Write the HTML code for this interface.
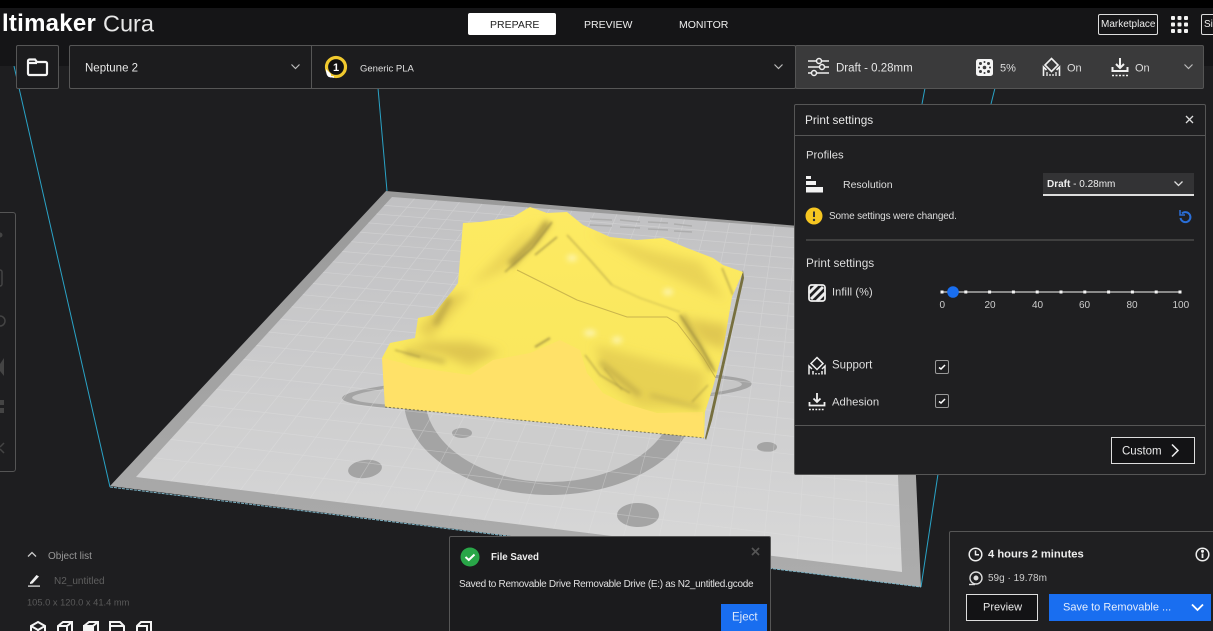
<!DOCTYPE html>
<html><head><meta charset="utf-8"><title>Ultimaker Cura</title>
<style>
html,body{margin:0;padding:0;background:#1e1e20}
#r{position:relative;width:1213px;height:631px;overflow:hidden;background:#1e1e20;font-family:"Liberation Sans",sans-serif;color:#e4e4e4}
#r div{position:absolute;box-sizing:border-box}
.t{position:absolute;white-space:nowrap;transform:translateY(calc(-50% + 2px));line-height:1}
svg{position:absolute;overflow:visible}
</style></head><body><div id="r">
<svg style="left:0;top:0" width="1213" height="631" viewBox="0 0 1213 631">
<defs>
<linearGradient id="bd" x1="0" y1="190" x2="0" y2="580" gradientUnits="userSpaceOnUse"><stop offset="0" stop-color="#c0c0c2"/><stop offset="1" stop-color="#d9d9d9"/></linearGradient>
<linearGradient id="bo" x1="0" y1="190" x2="0" y2="580" gradientUnits="userSpaceOnUse"><stop offset="0" stop-color="#9a9a9a"/><stop offset="1" stop-color="#acacac"/></linearGradient>
<linearGradient id="mt" x1="0" y1="210" x2="0" y2="410" gradientUnits="userSpaceOnUse"><stop offset="0" stop-color="#fdea62"/><stop offset="1" stop-color="#f8e65c"/></linearGradient>
<filter id="b3"><feGaussianBlur stdDeviation="3"/></filter>
<filter id="b1"><feGaussianBlur stdDeviation="1"/></filter>
<filter id="bh"><feGaussianBlur stdDeviation="1"/></filter>
<filter id="b6"><feGaussianBlur stdDeviation="5"/></filter>
<clipPath id="top"><path d="M382 358L390 343L415 338L418 318L433 315L453 290L458 283L463 223L480 222L513 217L530 207L547 213L567 212L583 225L610 237L637 240L663 238L687 248L713 258L723 265L743 272L732 297L723 350L713 387L705 412L704 438L385 407Z"/></clipPath>
</defs>
<g stroke="#2aa3c6" stroke-width="1" fill="none">
<path d="M14 66L110 487M378 88L387 191M925 88L922 104M995 88L991 104M938 474L921 587"/>
</g>
<path d="M110 486L386 191L905 235L921 587Z" fill="url(#bo)"/>
<path d="M110 487L921 587" stroke="#7fb6c8" stroke-width="1" stroke-dasharray="3 1"/>
<path d="M136 477L392 197L888 235L902 572Z" fill="url(#bd)"/>
<ellipse cx="547" cy="391" rx="205" ry="18" fill="#a4a4a4" transform="rotate(-2 547 391)"/>
<ellipse cx="547" cy="391" rx="195" ry="14" fill="#c6c6c6" transform="rotate(-2 547 391)"/>
<ellipse cx="550" cy="400" rx="146" ry="95" fill="#a4a4a4"/>
<ellipse cx="550" cy="397" rx="125" ry="85" fill="#cdcdcd"/>
<ellipse cx="365" cy="469" rx="17" ry="9" fill="#a4a4a4" transform="rotate(-8 365 469)"/>
<ellipse cx="462" cy="433" rx="10" ry="5" fill="#a4a4a4"/>
<ellipse cx="638" cy="515" rx="21" ry="12" fill="#a4a4a4"/>
<ellipse cx="767" cy="447" rx="10" ry="5" fill="#a4a4a4"/>
<g stroke="#e2e2e2" stroke-width=".7" opacity=".4" fill="none">
<path d="M153.6 457.7L901 548.8M170.4 439.4L900.1 526.7M186.4 421.9L899.2 505.7M201.6 405.2L898.4 485.6M216.2 389.3L897.6 466.4M230.2 374L896.9 448M243.5 359.4L896.1 430.5M256.3 345.4L895.4 413.6M268.6 332L894.7 397.4M280.4 319.1L894.1 382M291.6 306.8L893.5 367.1M302.7 294.7L892.9 352.6M312.9 283.5L892.3 339.1M323.1 272.3L891.8 325.7M332.8 261.8L891.2 313M342.2 251.4L890.7 300.5M351.2 241.7L890.2 288.8M359.9 232.1L889.8 277.3M368.3 222.9L889.3 266.2M376.5 214L888.8 255.4M384.3 205.4L888.4 245.1"/>
<path d="M170.8 481.3L414.5 198.7M205.6 485.6L437 200.5M240.4 490L459.5 202.2M275.2 494.3L482 203.9M310 498.6L504.5 205.6M344.8 502.9L527 207.4M379.6 507.2L549.5 209.1M414.4 511.6L572 210.8M449.2 515.9L594.5 212.6M484 520.2L617 214.3M518.8 524.5L639.5 216M553.6 528.8L662 217.8M588.4 533.2L684.5 219.5M623.2 537.5L707 221.2M658 541.8L729.5 223M692.8 546.1L752 224.7M727.6 550.4L774.5 226.4M762.4 554.8L797 228.1M797.2 559.1L819.5 229.9M832 563.4L842 231.6M866.8 567.7L864.5 233.3"/>
</g>
<g stroke="#a8a8a8" stroke-width="1.500" fill="none" opacity=".8">
<path d="M590 219L612 220M590 225L612 226M620 220L640 222M620 227L640 228M648 222L668 223M648 229L668 230M674 224L692 226M674 231L692 232"/>
</g>
<!-- model -->
<path d="M705 438L743 270L744 278L712 420L706 440Z" fill="#77703f"/>
<path d="M382 358L390 343L415 338L418 318L433 315L453 290L458 283L463 223L480 222L513 217L530 207L547 213L567 212L583 225L610 237L637 240L663 238L687 248L713 258L723 265L743 272L732 297L723 350L713 387L705 412L704 438L385 407Z" fill="url(#mt)"/>
<g clip-path="url(#top)">
<g filter="url(#b6)" fill="#d9bf4c">
<path d="M590 232L640 262L690 285L725 300L700 262L650 250Z" opacity=".5"/>
<path d="M595 345L660 362L705 372L700 408L640 408L605 380Z" opacity=".55"/>
<path d="M685 318L728 325L726 350L702 342Z" opacity=".8"/>
<path d="M400 350L440 354L470 366L500 352L470 342L430 342Z" opacity=".85"/>
<path d="M450 295L418 330L430 338L470 292Z" opacity=".7"/>
<path d="M540 222L505 270L470 285L520 235Z" opacity=".5"/>
</g>
<path d="M382 358L403 363L413 367L470 375L493 360L530 353L560 340L580 350L587 373L603 393L623 403L657 413L703 412L704 438L385 407Z" fill="#ffe168"/>
<g filter="url(#b3)" fill="none" stroke="#a8933f">
<path d="M548 222L535 240L510 265" stroke-width="7" opacity=".85"/>
<path d="M450 298L435 325" stroke-width="5" opacity=".7"/>
<path d="M405 352L445 362" stroke-width="4" opacity=".6"/>
<path d="M682 315L712 370" stroke-width="5" opacity=".75"/>
<path d="M600 362L640 395" stroke-width="5" opacity=".55"/>
<path d="M650 395L700 408" stroke-width="3" opacity=".5"/>
</g>
<g fill="none" stroke="#8f7f3c" filter="url(#bh)">
<path d="M552 222L532 248L505 272" stroke-width="1.500" opacity=".7"/>
<path d="M557 237L535 255" stroke-width="1.500" opacity=".7"/>
<path d="M567 235L590 260L612 285" stroke-width="1.300" opacity=".55"/>
<path d="M612 285L640 298L680 312" stroke-width="1" opacity=".4"/>
<path d="M585 355L600 375L630 393" stroke-width="1.300" opacity=".6"/>
<path d="M604 368L622 390" stroke-width="1" opacity=".5"/>
<path d="M680 315L700 345L715 372" stroke-width="1.500" opacity=".65"/>
<path d="M722 268L733 295" stroke-width="1.500" opacity=".6"/>
<path d="M708 385L692 402" stroke-width="1.300" opacity=".5"/>
<path d="M550 338L535 347" stroke-width="2" opacity=".7"/>
<path d="M395 350L420 357" stroke-width="1.500" opacity=".5"/>
</g>
<path d="M517 270L537 280L577 300L627 317L667 317L677 323L703 357L717 380" fill="none" stroke="#b5a045" stroke-width="1" opacity=".7"/>
<g fill="#fffbcf" filter="url(#b3)" opacity=".8">
<ellipse cx="572" cy="258" rx="5" ry="3"/><ellipse cx="590" cy="333" rx="6" ry="3"/><ellipse cx="617" cy="340" rx="5" ry="3"/><ellipse cx="668" cy="292" rx="5" ry="3"/>
</g>
</g>
<path d="M385 407L704 438" stroke="#3a3a2a" stroke-width="1" stroke-dasharray="2 2" opacity=".6"/>
</svg>

<!-- header -->
<div style="left:0;top:0;width:1213px;height:8px;background:#000"></div>
<div style="left:0;top:8px;width:1213px;height:58px;background:#151517"></div>
<span class="t" style="left:2px;top:21.500px;font-size:24px;font-weight:bold;letter-spacing:.25px;color:#fff">ltimaker</span>
<span class="t" style="left:103px;top:21.500px;font-size:23.500px;color:#e8e8e8">Cura</span>
<div style="left:468px;top:13px;width:88px;height:22px;background:#fff;border-radius:2px"></div>
<span class="t" style="left:490px;top:22.500px;font-size:10.500px;color:#222">PREPARE</span>
<span class="t" style="left:584px;top:22.500px;font-size:10.500px;color:#eee">PREVIEW</span>
<span class="t" style="left:679px;top:22.500px;font-size:10.500px;color:#eee">MONITOR</span>
<div style="left:1098px;top:14px;width:60px;height:21px;border:1px solid #ddd;border-radius:2px"></div>
<span class="t" style="left:1101px;top:23px;font-size:10px;color:#eee">Marketplace</span>
<svg style="left:1171px;top:16px" width="18" height="17" fill="#f2f2f2"><rect x="0" y="0" width="4" height="4" rx="1"/><rect x="6.500" y="0" width="4" height="4" rx="1"/><rect x="13" y="0" width="4" height="4" rx="1"/><rect x="0" y="6.500" width="4" height="4" rx="1"/><rect x="6.500" y="6.500" width="4" height="4" rx="1"/><rect x="13" y="6.500" width="4" height="4" rx="1"/><rect x="0" y="13" width="4" height="4" rx="1"/><rect x="6.500" y="13" width="4" height="4" rx="1"/><rect x="13" y="13" width="4" height="4" rx="1"/></svg>
<div style="left:1201px;top:14px;width:30px;height:21px;border:1px solid #ddd;border-radius:2px"></div>
<span class="t" style="left:1204px;top:23px;font-size:10px;color:#eee">Si</span>

<!-- toolbar -->
<div style="left:16px;top:45px;width:43px;height:44px;background:#1c1c1e;border:1px solid #565656;border-radius:2px"></div>
<svg style="left:26px;top:57px" width="23" height="20" fill="none" stroke="#f4f4f4" stroke-width="2.200"><path d="M2 4a1.500 1.500 0 0 1 1.500-1.500H9L11 5H19.500A1.500 1.500 0 0 1 21 6.500V16.500A1.500 1.500 0 0 1 19.500 18H3.500A1.500 1.500 0 0 1 2 16.500Z"/><path d="M2 6H11"/></svg>
<div style="left:69px;top:45px;width:727px;height:44px;background:#1c1c1e;border:1px solid #565656;border-radius:2px"></div>
<div style="left:311px;top:46px;width:1px;height:42px;background:#565656"></div>
<span class="t" style="left:85px;top:66.500px;font-size:11.500px;color:#e8e8e8">Neptune 2</span>
<svg style="left:290px;top:63px" width="11" height="8" fill="none" stroke="#bbb" stroke-width="1.200"><path d="M1.500 1.500L5.500 5.500L9.500 1.500"/></svg>
<svg style="left:324px;top:55px" width="24" height="24"><circle cx="12" cy="12" r="9.500" fill="#111" stroke="#f0c92e" stroke-width="3.200"/><path d="M2 14c0 5 1 7 3 8l2 .500V19" fill="#fff"/><path d="M6 21.500L10 22" stroke="#fff" stroke-width="1.500"/><text x="12" y="16" font-size="11" font-weight="bold" fill="#fff" text-anchor="middle" font-family="Liberation Sans">1</text></svg>
<span class="t" style="left:360px;top:66.500px;font-size:9.500px;color:#e0e0e0">Generic PLA</span>
<svg style="left:773px;top:63px" width="11" height="8" fill="none" stroke="#bbb" stroke-width="1.200"><path d="M1.500 1.500L5.500 5.500L9.500 1.500"/></svg>

<div style="left:795px;top:45px;width:409px;height:44px;background:#3a3a3b;border:1px solid #555;border-radius:2px"></div>
<svg style="left:807px;top:57px" width="23" height="20" fill="none" stroke="#f0f0f0" stroke-width="1.500"><path d="M1 4H9M15 4H22M1 10H12M18 10H22M1 16H4M10 16H22"/><circle cx="12" cy="4" r="2.500"/><circle cx="15" cy="10" r="2.500"/><circle cx="7" cy="16" r="2.500"/></svg>
<span class="t" style="left:836px;top:66.500px;font-size:11.500px;color:#e8e8e8">Draft - 0.28mm</span>
<svg style="left:976px;top:59px" width="17" height="17"><rect width="17" height="17" rx="2.500" fill="#f4f4f4"/><g fill="#3a3a3b"><circle cx="4.500" cy="4.500" r="1.500"/><circle cx="12.500" cy="4.500" r="1.500"/><circle cx="8.500" cy="8.500" r="1.800"/><circle cx="4.500" cy="12.500" r="1.500"/><circle cx="12.500" cy="12.500" r="1.500"/><circle cx="8.500" cy="3" r="1"/><circle cx="8.500" cy="14" r="1"/><circle cx="3" cy="8.500" r="1"/><circle cx="14" cy="8.500" r="1"/></g></svg>
<span class="t" style="left:1000px;top:66.500px;font-size:11px;color:#ddd">5%</span>
<svg style="left:1042px;top:57px" width="19" height="20" fill="none" stroke="#f0f0f0" stroke-width="1.600"><path d="M9.500 1.500L16 8L9.500 14.500L3 8Z"/><path d="M1.500 19V10L4.500 13M17.500 19V10L14.500 13" /><path d="M5 19V15M8 19V17M11 19V17M14 19V15" stroke-width="1.300"/></svg>
<span class="t" style="left:1067px;top:66.500px;font-size:11px;color:#ddd">On</span>
<svg style="left:1111px;top:57px" width="18" height="20" fill="none" stroke="#f0f0f0" stroke-width="2"><path d="M9 1V10M5 7L9 11L13 7"/><path d="M1.500 10V14H16.500V10"/><path d="M1 18.500H17" stroke-dasharray="2 1.500" stroke-width="1.500"/></svg>
<span class="t" style="left:1135px;top:66.500px;font-size:11px;color:#ddd">On</span>
<svg style="left:1183px;top:63px" width="11" height="8" fill="none" stroke="#bbb" stroke-width="1.200"><path d="M1.500 1.500L5.500 5.500L9.500 1.500"/></svg>

<!-- print settings -->
<div style="left:794px;top:104px;width:412px;height:371px;background:#1f1f21;border:1px solid #565656;border-radius:2px"></div>
<div style="left:795px;top:135px;width:410px;height:1px;background:#565656"></div>
<span class="t" style="left:805px;top:118.500px;font-size:11.800px;color:#e8e8e8">Print settings</span>
<svg style="left:1185px;top:115px" width="9" height="9" stroke="#ddd" stroke-width="1.300"><path d="M1 1L8 8M8 1L1 8"/></svg>
<span class="t" style="left:806px;top:154px;font-size:11.300px;color:#ddd">Profiles</span>
<svg style="left:806px;top:175px" width="18" height="18" fill="#f2f2f2"><rect x="0" y="1" width="5" height="3"/><rect x="0" y="6" width="10" height="4"/><rect x="0" y="12" width="17" height="5.500"/></svg>
<span class="t" style="left:843px;top:183px;font-size:10.500px;color:#ddd">Resolution</span>
<div style="left:1043px;top:173px;width:151px;height:23px;background:#333335;border-bottom:2px solid #ddd"></div>
<span class="t" style="left:1047px;top:183px;font-size:10px;color:#eee"><b>Draft</b> - 0.28mm</span>
<svg style="left:1173px;top:180px" width="11" height="8" fill="none" stroke="#ddd" stroke-width="1.300"><path d="M1.500 1.500L5.500 5.500L9.500 1.500"/></svg>
<svg style="left:805px;top:207px" width="18" height="18"><circle cx="9" cy="9" r="8.500" fill="#f6c621"/><path d="M9 4.500V10" stroke="#333" stroke-width="2"/><circle cx="9" cy="13" r="1.200" fill="#333"/></svg>
<span class="t" style="left:829px;top:215px;font-size:10px;letter-spacing:-.15px;color:#ddd">Some settings were changed.</span>
<svg style="left:1178px;top:209px" width="14" height="15" fill="none" stroke="#2a6fd8" stroke-width="2"><path d="M4 4.500A5 5 0 1 1 2.500 9"/><path d="M2 1V6H7" stroke-width="1.500"/></svg>
<div style="left:806px;top:239px;width:388px;height:2px;background:#3f3f3f"></div>
<span class="t" style="left:806px;top:262px;font-size:11.800px;color:#ddd">Print settings</span>
<svg style="left:808px;top:284px" width="18" height="18"><rect x="1" y="1" width="16" height="16" rx="2.500" fill="#1f1f21" stroke="#eee" stroke-width="1.800"/><path d="M1 9L9 1M3 15L15 3M9 17L17 9" stroke="#eee" stroke-width="3" fill="none"/></svg>
<span class="t" style="left:832px;top:291px;font-size:11px;letter-spacing:.1px;color:#ddd">Infill (%)</span>
<svg style="left:938px;top:284px" width="246" height="16"><path d="M4 8H242" stroke="#f4f4f4" stroke-width="1"/><g fill="#f4f4f4"><rect x="2.500" y="6.500" width="3" height="3"/><rect x="26.300" y="6.500" width="3" height="3"/><rect x="50.100" y="6.500" width="3" height="3"/><rect x="73.900" y="6.500" width="3" height="3"/><rect x="97.700" y="6.500" width="3" height="3"/><rect x="121.500" y="6.500" width="3" height="3"/><rect x="145.300" y="6.500" width="3" height="3"/><rect x="169.100" y="6.500" width="3" height="3"/><rect x="192.900" y="6.500" width="3" height="3"/><rect x="216.700" y="6.500" width="3" height="3"/><rect x="240.500" y="6.500" width="3" height="3"/></g><circle cx="15" cy="8" r="5.800" fill="#196ef0"/></svg>
<span class="t" style="left:939.500px;top:304px;font-size:10px;color:#ccc">0</span>
<span class="t" style="left:984.500px;top:304px;font-size:10px;color:#ccc">20</span>
<span class="t" style="left:1032px;top:304px;font-size:10px;color:#ccc">40</span>
<span class="t" style="left:1079px;top:304px;font-size:10px;color:#ccc">60</span>
<span class="t" style="left:1126.500px;top:304px;font-size:10px;color:#ccc">80</span>
<span class="t" style="left:1172.500px;top:304px;font-size:10px;color:#ccc">100</span>
<svg style="left:808px;top:356px" width="18" height="19" fill="none" stroke="#f0f0f0" stroke-width="1.500"><path d="M9 1.500L15 7.500L9 13.500L3 7.500Z"/><path d="M1 18.500V10L4 13M17 18.500V10L14 13"/><path d="M5 18.500V15M8 18.500V17M11 18.500V17M14 18.500V15"/></svg>
<span class="t" style="left:832px;top:364px;font-size:11.500px;color:#ddd">Support</span>
<div style="left:935px;top:360px;width:14px;height:14px;border:1px solid #999;border-radius:2px"></div>
<svg style="left:938px;top:363px" width="8" height="8" fill="none" stroke="#fff" stroke-width="1.500"><path d="M1 4.500L3 6L7 2"/></svg>
<svg style="left:808px;top:393px" width="18" height="18" fill="none" stroke="#f0f0f0" stroke-width="1.800"><path d="M9 0V8M5.500 5.500L9 9L12.500 5.500"/><path d="M1.500 9V12.500H16.500V9"/><path d="M1 16.500H17" stroke-dasharray="1.800 1.400" stroke-width="1.500"/></svg>
<span class="t" style="left:832px;top:401px;font-size:11.300px;color:#ddd">Adhesion</span>
<div style="left:935px;top:394px;width:14px;height:14px;border:1px solid #999;border-radius:2px"></div>
<svg style="left:938px;top:397px" width="8" height="8" fill="none" stroke="#fff" stroke-width="1.500"><path d="M1 4.500L3 6L7 2"/></svg>
<div style="left:795px;top:425px;width:410px;height:1px;background:#565656"></div>
<div style="left:1111px;top:437px;width:84px;height:27px;background:#131315;border:1px solid #ddd"></div>
<span class="t" style="left:1122px;top:450px;font-size:11.500px;color:#e8e8e8">Custom</span>
<svg style="left:1170px;top:443px" width="10" height="15" fill="none" stroke="#eee" stroke-width="1.500"><path d="M2 1.500L8 7.500L2 13.500"/></svg>

<!-- left tool panel -->
<div style="left:-10px;top:212px;width:26px;height:260px;border:1px solid #555;border-radius:3px;background:#1e1e20"></div>
<svg style="left:0;top:225px" width="6" height="235" fill="#444"><circle cx="0" cy="10" r="2.500"/><rect x="-5" y="45" width="7" height="16" rx="2" fill="none" stroke="#444" stroke-width="1.500"/><circle cx="0" cy="96" r="5" fill="none" stroke="#444" stroke-width="1.500"/><path d="M0 139L4 133V151L0 146Z"/><path d="M0 175H4V180H0ZM0 183H4V188H0Z"/><path d="M0 222L4 218M0 224L4 228" stroke="#444" stroke-width="1.500"/></svg>

<!-- object list -->
<svg style="left:27px;top:551px" width="10" height="7" fill="none" stroke="#ccc" stroke-width="1.300"><path d="M1 5.500L5 1.500L9 5.500"/></svg>
<span class="t" style="left:48px;top:555px;font-size:10px;color:#999">Object list</span>
<svg style="left:28px;top:574px" width="13" height="13" fill="#eee"><path d="M2 8.500L8.500 1L11 2.500L4.500 9.500L2 10Z"/><rect x="0" y="11.500" width="12" height="1.200"/></svg>
<span class="t" style="left:54px;top:580px;font-size:10px;color:#5f5f5f">N2_untitled</span>
<span class="t" style="left:27px;top:601px;font-size:9.300px;color:#5a5a5a">105.0 x 120.0 x 41.4 mm</span>
<svg style="left:28px;top:620px" width="126" height="16" fill="none" stroke="#f4f4f4" stroke-width="2"><path d="M10 2L17 6V14H3V6ZM3 6L10 10L17 6M10 10V15"/><path d="M30 6L35 2H44V14H30ZM30 6H39V14M39 6L44 2"/><path d="M56 6L61 2H70V14H56ZM56 6H65V14M65 6L70 2" /><rect x="56" y="6" width="9" height="4" fill="#f4f4f4"/><path d="M82 2H92L96 6V14H82ZM82 6H96"/><path d="M109 6L113 2H123V14H109ZM109 6H119V14"/></svg>

<!-- message -->
<div style="left:449px;top:536px;width:322px;height:100px;background:#1b1b1d;border:1px solid #565656;border-radius:2px"></div>
<svg style="left:460px;top:547px" width="20" height="20" fill="none"><circle cx="10" cy="10" r="9.500" fill="#29a648"/><path d="M5.500 10L8.800 13L14.500 7.500" stroke="#fff" stroke-width="2"/></svg>
<span class="t" style="left:491px;top:556px;font-size:9.700px;font-weight:bold;color:#eee">File Saved</span>
<svg style="left:751px;top:547px" width="9" height="9" stroke="#555" stroke-width="1.700"><path d="M1 1L8 8M8 1L1 8"/></svg>
<span class="t" style="left:459px;top:583px;font-size:10px;letter-spacing:-.3px;color:#e0e0e0">Saved to Removable Drive Removable Drive (E:) as N2_untitled.gcode</span>
<div style="left:721px;top:604px;width:46px;height:30px;background:#196ef0"></div>
<span class="t" style="left:732px;top:616px;font-size:11.500px;color:#dfe9fb">Eject</span>

<!-- slice panel -->
<div style="left:949px;top:531px;width:280px;height:110px;background:#1f1f21;border:1px solid #565656;border-radius:2px"></div>
<svg style="left:968px;top:547px" width="15" height="15" fill="none" stroke="#eee" stroke-width="1.500"><circle cx="7.500" cy="7.500" r="6.300"/><path d="M7.500 3.500V7.800H11"/></svg>
<span class="t" style="left:988px;top:553px;font-size:11.200px;font-weight:bold;color:#eee">4 hours 2 minutes</span>
<svg style="left:1195px;top:547px" width="15" height="15" fill="none" stroke="#eee" stroke-width="1.500"><circle cx="7.500" cy="7.500" r="6.300"/><path d="M7.500 6.500V11" stroke-width="1.800"/><circle cx="7.500" cy="4.300" r=".8" fill="#eee"/></svg>
<svg style="left:968px;top:571px" width="15" height="15" fill="none" stroke="#ddd" stroke-width="1.400"><circle cx="8" cy="7" r="6"/><circle cx="8" cy="7" r="1.800" fill="#ddd"/><path d="M1 13.500H7"/></svg>
<span class="t" style="left:988px;top:577px;font-size:10px;color:#ccc">59g · 19.78m</span>
<div style="left:966px;top:594px;width:72px;height:27px;background:#131315;border:1px solid #ddd"></div>
<span class="t" style="left:983px;top:606px;font-size:11px;color:#e8e8e8">Preview</span>
<div style="left:1049px;top:594px;width:162px;height:27px;background:#196ef0"></div>
<span class="t" style="left:1063px;top:606px;font-size:11px;color:#e6eefc">Save to Removable ...</span>
<svg style="left:1191px;top:603px" width="13" height="9" fill="none" stroke="#fff" stroke-width="1.800"><path d="M1 1.500L6.500 7L12 1.500"/></svg>
</div></body></html>
